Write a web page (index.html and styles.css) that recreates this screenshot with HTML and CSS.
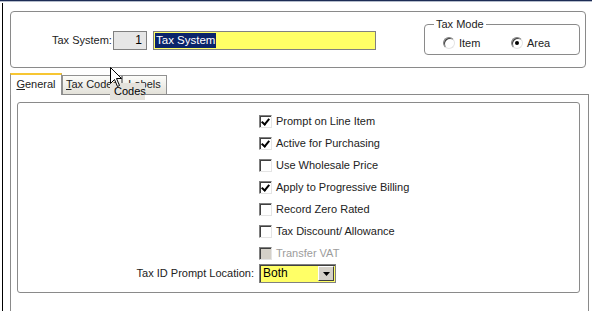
FILE: index.html
```html
<!DOCTYPE html>
<html lang="en">
<head>
    <meta charset="UTF-8">
    <title>Tax System</title>
    <link rel="stylesheet" href="styles.css">
</head>
<body>
    <div class="topbar"></div>
    <div class="pane">
        <div class="header">
            <span class="sys-label">Tax System:</span>
            <div class="num-field">1</div>
            <div class="name-field"><span class="sel">Tax System</span></div>
            <fieldset class="mode">
                <legend>Tax Mode</legend>
                <div class="radios">
                    <span class="radio-opt"><span class="radio"></span>Item</span>
                    <span class="radio-opt"><span class="radio on"></span>Area</span>
                </div>
            </fieldset>
        </div>

        <div class="tabs">
            <div class="tab active"><u>G</u>eneral</div>
            <div class="tab tab-codes"><u>T</u>ax Codes</div>
            <div class="tab tab-labels"><u>L</u>abels</div>
            <div class="tooltip">Codes</div>
            <svg class="cursor" width="13" height="21" viewBox="0 0 13 21">
                <path d="M0.5 0.5 L0.5 16.5 L4.5 12.5 L7.5 19.5 L9.5 18.5 L6.5 11.5 L11.5 11.5 Z" fill="#fff" stroke="#000" stroke-width="1"/>
            </svg>
        </div>

        <div class="page">
            <div class="group">
                <div class="opts">
                    <label class="opt"><span class="check on"></span>Prompt on Line Item</label>
                    <label class="opt"><span class="check on"></span>Active for Purchasing</label>
                    <label class="opt"><span class="check"></span>Use Wholesale Price</label>
                    <label class="opt"><span class="check on"></span>Apply to Progressive Billing</label>
                    <label class="opt"><span class="check"></span>Record Zero Rated</label>
                    <label class="opt"><span class="check"></span>Tax Discount/ Allowance</label>
                    <label class="opt disabled"><span class="check"></span>Transfer VAT</label>

                    <span class="prompt-label">Tax ID Prompt Location:</span>
                    <div class="combo">
                        <span class="combo-text">Both</span>
                        <span class="combo-btn">
                            <svg width="7" height="4" viewBox="0 0 7 4"><path d="M0 0 H7 L3.5 4 Z" fill="#000"/></svg>
                        </span>
                    </div>
                </div>
            </div>
        </div>
    </div>
</body>
</html>
```

FILE: styles.css
```css
* {
    margin: 0;
    padding: 0;
    box-sizing: border-box;
}

body {
    font-family: 'Liberation Sans', Arial, sans-serif;
    font-size: 11px;
    color: #000;
    background: #fff;
    width: 592px;
    height: 311px;
    overflow: hidden;
}

.topbar {
    height: 2px;
    border-top: 1px solid #1d2c55;
    background: #b4bccb;
}

.pane {
    margin: 1px 0 0 2px;
    border-left: 1px solid #000;
    padding: 8px 0 0 7px;
    height: 308px;
}

/* cabecera */
.header {
    width: 576px;
    height: 57px;
    border: 1px solid #8a8a8a;
    border-radius: 4px;
    display: flex;
    align-items: flex-start;
    padding: 0 5px 0 41px;
}

.sys-label {
    width: 56px;
    flex-shrink: 0;
    margin-top: 19px;
    line-height: 19px;
    white-space: nowrap;
    text-align: right;
    color: #222;
}

.num-field {
    width: 34px;
    height: 19px;
    margin: 19px 0 0 5px;
    background: #e6e6e6;
    border: 1px solid #808080;
    text-align: right;
    padding-right: 4px;
    line-height: 17px;
    font-size: 12px;
}

.name-field {
    width: 223px;
    height: 19px;
    margin: 19px 0 0 6px;
    background: #ffff66;
    border: 1px solid #808080;
    padding: 1px 0 0 1px;
}

.sel {
    display: inline-block;
    background: #0a246a;
    color: #fff;
    font-size: 11.5px;
    line-height: 15px;
    padding: 0 1px;
}

.mode {
    margin: 6px 0 0 auto;
    width: 153px;
    border: 1px solid #8a8a8a;
    border-radius: 4px;
    padding: 5px 0 5px 0;
}

.mode legend {
    margin-left: 9px;
    padding: 0 2px;
    line-height: 13px;
    font-size: 11px;
    color: #222;
}

.radios {
    display: flex;
    align-items: center;
    height: 13px;
    padding-left: 18px;
}

.radio-opt {
    display: flex;
    align-items: center;
    gap: 4px;
    width: 68px;
    color: #222;
}

.radio {
    width: 12px;
    height: 12px;
    border-radius: 50%;
    border: 1px solid;
    border-color: #808080 #e4e4e4 #e4e4e4 #808080;
    background: #fff;
    box-shadow: inset 1px 1px 0 #404040;
    position: relative;
}

.radio.on::after {
    content: '';
    position: absolute;
    left: 3px;
    top: 3px;
    width: 4px;
    height: 4px;
    border-radius: 50%;
    background: #000;
}

/* pestañas */
.tabs {
    position: relative;
    margin-top: 5px;
    height: 21px;
    display: flex;
    align-items: flex-end;
}

.tab {
    height: 19px;
    border: 1px solid #919191;
    border-bottom: none;
    background: linear-gradient(#fcfcfa, #e3e1d9);
    line-height: 17px;
    text-align: center;
    color: #222;
}

.tab.active {
    width: 52px;
    height: 22px;
    margin-bottom: -1px;
    position: relative;
    z-index: 1;
    background: #fff;
    border-top: 2px solid #f7c632;
    line-height: 19px;
}

.tab-codes {
    width: 60px;
}

.tab-labels {
    width: 45px;
}

.tooltip {
    position: absolute;
    left: 100px;
    top: 10px;
    width: 35px;
    height: 17px;
    background: #e4e2dc;
    line-height: 17px;
    padding-left: 4px;
    white-space: nowrap;
    z-index: 2;
}

.cursor {
    position: absolute;
    left: 100px;
    top: -6px;
    z-index: 3;
}

/* página */
.page {
    width: 579px;
    height: 220px;
    border: 1px solid #8a8a8a;
    border-bottom: none;
    padding: 7px 0 0 6px;
}

.group {
    width: 563px;
    height: 191px;
    border: 1px solid #8a8a8a;
    border-radius: 3px;
    padding-top: 7px;
}

.opts {
    display: grid;
    grid-template-columns: 241px 1fr;
    grid-auto-rows: 22px;
}

.opt {
    grid-column: 2;
    display: flex;
    align-items: center;
    gap: 4px;
    color: #222;
}

.opt.disabled {
    color: #9c9c9c;
}

.check {
    width: 13px;
    height: 13px;
    border: 1px solid;
    border-color: #808080 #e4e4e4 #e4e4e4 #808080;
    box-shadow: inset 1px 1px 0 #404040;
    background: #fff;
    position: relative;
}

.check.on::after {
    content: '';
    position: absolute;
    left: 3px;
    top: 1px;
    width: 3px;
    height: 6px;
    border: solid #000;
    border-width: 0 2px 2px 0;
    transform: rotate(40deg);
}

.opt.disabled .check {
    background: #d4d0c8;
}

.prompt-label {
    grid-column: 1;
    text-align: right;
    padding-right: 5px;
    line-height: 19px;
    height: 19px;
    color: #222;
}

.combo {
    width: 77px;
    height: 19px;
    border: 1px solid #808080;
    box-shadow: inset 1px 1px 0 #404040;
    background: #ffff66;
    display: flex;
    align-items: stretch;
}

.combo-text {
    flex: 1;
    padding: 1px 0 0 3px;
    line-height: 15px;
    font-size: 12px;
}

.combo-btn {
    width: 16px;
    margin: 1px 1px 1px 0;
    background: #d4d0c8;
    border: 1px solid;
    border-color: #fff #404040 #404040 #fff;
    display: flex;
    align-items: center;
    justify-content: center;
}
```
